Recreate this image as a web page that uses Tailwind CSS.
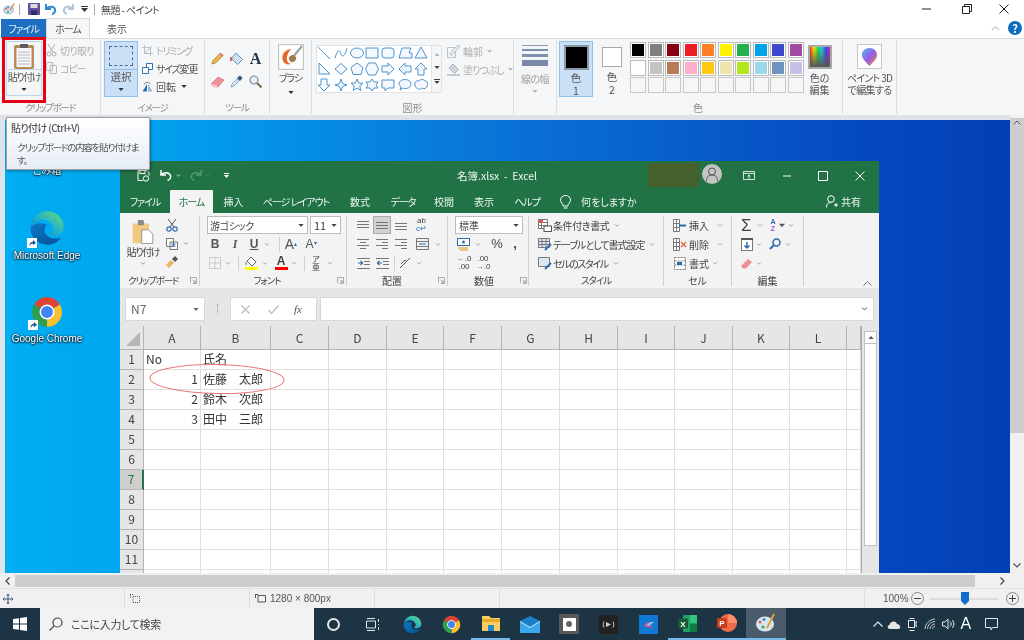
<!DOCTYPE html>
<html lang="ja">
<head>
  <meta charset="UTF-8" />
  <title>無題 - ペイント</title>
  <script src="https://cdn.jsdelivr.net/npm/@tailwindcss/browser@4"></script>
</head>
<body class="w-[1024px] h-[640px] overflow-hidden bg-[#f0f0f0] text-[#555] text-[10px] whitespace-nowrap font-['Noto_Sans_CJK_JP','Noto_Sans',sans-serif] [font-feature-settings:'palt']">
  <!-- shared icons -->
  <svg class="absolute w-0 h-0">
    <symbol id="caret" viewBox="0 0 7 4"><path d="M0 0h7L3.5 4z" fill="currentColor"/></symbol>
    <symbol id="chev" viewBox="0 0 7 4"><path d="M1 .5l2.5 2.5L6 .5" fill="none" stroke="currentColor"/></symbol>
    <symbol id="launcher" viewBox="0 0 8 8"><path d="M.5 7V.5H7.5V7.5H3M3 3l3 3M6 4v2H4" fill="none" stroke="#888" stroke-width=".8"/></symbol>
    <symbol id="chrome" viewBox="0 0 48 48">
      <path d="M24 24L6.7 14A20 20 0 0 1 41.3 14Z" fill="#db4437"/>
      <path d="M24 24L41.3 14A20 20 0 0 1 24 44Z" fill="#fbc02d"/>
      <path d="M24 24L24 44A20 20 0 0 1 6.7 14Z" fill="#2e9e4f"/>
      <circle cx="24" cy="24" r="10" fill="#fff"/><circle cx="24" cy="24" r="8" fill="#4285f4"/>
    </symbol>
    <defs>
      <linearGradient id="edgeTop" x1="0" y1="1" x2="1" y2="0"><stop offset="0" stop-color="#0c6fb4"/><stop offset=".5" stop-color="#27b4c8"/><stop offset="1" stop-color="#66dc74"/></linearGradient>
      <linearGradient id="edgeLow" x1="0" y1="0" x2="1" y2="1"><stop offset="0" stop-color="#0b78c8"/><stop offset="1" stop-color="#0a4f96"/></linearGradient>
    </defs>
    <symbol id="edge" viewBox="0 0 48 48">
      <path d="M4 24C4 35 13 44 24 44C31 44 37 41 41 35C35 38 28 37 24 33C20 29 20 24 24 20C16 17 8 18 4 24Z" fill="url(#edgeLow)"/>
      <path d="M4 24C5 12 14 4 24 4C36 4 44 13 44 23C44 30 38 33 33 33C30 33 27 32 27 31C31 29 32 26 31 23C29 17 24 14 18 14C12 14 7 18 4 24Z" fill="url(#edgeTop)"/>
    </symbol>
    <symbol id="shortcut" viewBox="0 0 10 10"><rect width="10" height="10" fill="#fff"/><path d="M2.5 8C2.5 5 4 3.8 6 3.8V2L9 4.7 6 7.3V5.5C4.5 5.5 3.5 6.3 2.5 8Z" fill="#1a4fa0"/></symbol>
  </svg>

  <!-- the reference is a slightly soft, rescaled capture -->
  <div class="relative w-[1024px] h-[640px] flex flex-col blur-[0.35px]">
    <!-- Paint title bar -->
    <div class="h-[18px] bg-white flex items-center shrink-0">
      <svg class="ml-[3px] w-[12px] h-[12px]" viewBox="0 0 12 12"><ellipse cx="5.5" cy="7" rx="5" ry="4" fill="#cfe0ee" stroke="#7b98b2" stroke-width=".6"/><circle cx="3" cy="6" r="1" fill="#e0584f"/><circle cx="5" cy="9" r="1" fill="#3f9e55"/><circle cx="5" cy="4.5" r="1" fill="#3c82d0"/><path d="M11 .5L7 7.5" stroke="#d2983c" stroke-width="1.5"/></svg>
      <div class="ml-[4px] w-px h-[11px] bg-[#aaa]"></div>
      <svg class="ml-[8px] w-[12px] h-[12px]" viewBox="0 0 12 12"><rect width="12" height="12" rx="1" fill="#5f4f9f"/><rect x="2.5" y="1" width="7" height="4" fill="#ddd"/><rect x="3" y="7.5" width="6" height="4.5" fill="#2e2a66"/></svg>
      <svg class="ml-[5px] w-[12px] h-[12px]" viewBox="0 0 12 12"><path d="M1 1v5h5M1.5 5.5C4 3 9 3 10 6.5C10.5 8.5 9.5 10.5 7 11" fill="none" stroke="#2b88d8" stroke-width="2"/></svg>
      <svg class="ml-[5px] w-[12px] h-[12px]" viewBox="0 0 12 12"><path d="M11 1v5H6M10.5 5.5C8 3 3 3 2 6.5C1.5 8.5 2.5 10.5 5 11" fill="none" stroke="#b6c6d6" stroke-width="2"/></svg>
      <div class="ml-[7px] w-[7px] flex flex-col gap-[1px] text-[#333]"><div class="h-px bg-[#333]"></div><svg class="w-[7px] h-[4px]"><use href="#caret"/></svg></div>
      <div class="ml-[6px] w-px h-[11px] bg-[#aaa]"></div>
      <span class="ml-[6px] text-[#444] tracking-[-.6px]">無題 - ペイント</span>
      <div class="ml-auto flex items-center">
        <svg class="w-[10px] h-[10px]" viewBox="0 0 10 10"><path d="M0 5h9" stroke="#222"/></svg>
        <svg class="ml-[30px] w-[10px] h-[10px]" viewBox="0 0 10 10"><path d="M.5 2.5h7v7h-7zM2.5 2.5v-2h7v7h-2" fill="none" stroke="#222"/></svg>
        <svg class="ml-[27px] mr-[15px] w-[10px] h-[10px]" viewBox="0 0 10 10"><path d="M.5.5l9 9M9.5.5l-9 9" stroke="#222"/></svg>
      </div>
    </div>

    <!-- Paint tabs -->
    <div class="h-[20px] bg-white flex items-end shrink-0 relative">
      <div class="ml-px w-[45px] h-[19px] bg-[#1e6fc2] text-[#e6f0fa] text-center leading-[19px] tracking-[-1px]">ファイル</div>
      <div class="w-[44px] h-[20px] bg-[#f5f6f7] border-x border-t border-[#dadbdc] text-center leading-[19px] tracking-[-1px]">ホーム</div>
      <div class="ml-[11px] w-[32px] h-[19px] text-center leading-[19px]">表示</div>
      <div class="ml-auto mr-[2px] self-center flex items-center">
        <svg class="w-[9px] h-[6px] mr-[8px]" viewBox="0 0 9 6"><path d="M1 5l3.5-3.5L8 5" fill="none" stroke="#c4c4c4" stroke-width="1.2"/></svg>
        <div class="w-[14px] h-[14px] rounded-full bg-[#0f6cbd] text-white text-[11px] font-bold leading-[14px] text-center">?</div>
      </div>
    </div>

    <!-- Paint ribbon -->
    <div class="h-[77px] shrink-0 bg-[#f5f6f7] border-t border-[#dadbdc] pt-[1px] flex">
      <div class="w-[101px] flex flex-col border-r border-[#dcdddf] mb-[1px]">
        <div class="flex-1 flex pl-[6px] pt-[1px]">
          <div class="w-[36px] h-[55px] border border-[#b6d6f2] flex flex-col items-center">
            <div class="h-[28px] w-full border-b border-[#b6d6f2] flex items-center justify-center">
              <svg class="w-[22px] h-[26px]" viewBox="0 0 22 26"><rect x="1" y="2" width="20" height="24" rx="2" fill="#b98a5c"/><rect x="3.5" y="5" width="15" height="19" fill="#f7f7f7"/><path d="M5 9h12M5 12h12M5 15h12M5 18h12M5 21h12" stroke="#b5b8c0"/><rect x="7" y="1" width="8" height="4" rx="1" fill="#5c5c5c"/></svg>
            </div>
            <span class="leading-[14px] tracking-[-1.4px]">貼り付け</span>
            <svg class="w-[6px] h-[3px] mt-[4px] text-[#333]"><use href="#caret"/></svg>
          </div>
          <div class="ml-[4px] flex flex-col text-[#aeaeae]">
            <div class="h-[18px] flex items-center"><svg class="w-[11px] h-[13px]" viewBox="0 0 11 13"><path d="M2 0l5 8M9 0L4 8" stroke="#b0b0b0"/><circle cx="3" cy="10" r="2" fill="none" stroke="#b0b0b0"/><circle cx="8" cy="10" r="2" fill="none" stroke="#b0b0b0"/></svg><span class="ml-[3px] tracking-[-.7px]">切り取り</span></div>
            <div class="h-[18px] flex items-center"><svg class="w-[11px] h-[12px]" viewBox="0 0 11 12"><path d="M.5.5h6v8h-6zM4 3.5h6.5v8H4z" fill="#f5f6f7" stroke="#b8b8b8"/></svg><span class="ml-[3px] tracking-[-1px]">コピー</span></div>
          </div>
        </div>
        <div class="h-[13px] text-center text-[9.5px] leading-[13px] text-[#8c8c8c] tracking-[-1.2px]">クリップボード</div>
      </div>

      <div class="w-[104px] flex flex-col border-r border-[#dcdddf] mb-[1px]">
        <div class="flex-1 flex pl-[3px] pt-[1px]">
          <div class="w-[34px] h-[56px] bg-[#c9e0f7] border border-[#90bfe9] flex flex-col items-center">
            <div class="h-[28px] w-full border-b border-[#90bfe9] flex items-center justify-center">
              <div class="w-[24px] h-[20px] border border-dashed border-[#4a6d94]"></div>
            </div>
            <span class="leading-[14px] text-[10.5px]">選択</span>
            <svg class="w-[6px] h-[3px] mt-[4px] text-[#333]"><use href="#caret"/></svg>
          </div>
          <div class="ml-[4px] flex flex-col">
            <div class="h-[18px] flex items-center text-[#aeaeae]"><svg class="w-[11px] h-[11px]" viewBox="0 0 11 11"><path d="M2.5 0v8.5H11M0 2.5h8.5V11M3 8l7-7" fill="none" stroke="#b8c2cc"/></svg><span class="ml-[3px] tracking-[-1.3px]">トリミング</span></div>
            <div class="h-[18px] flex items-center"><svg class="w-[11px] h-[11px]" viewBox="0 0 11 11"><path d="M.5 4.5h6v6h-6zM4.5 4V.5h6v6H7" fill="#fff" stroke="#2a72b8"/></svg><span class="ml-[3px] tracking-[-1.2px]">サイズ変更</span></div>
            <div class="h-[18px] flex items-center"><svg class="w-[11px] h-[11px]" viewBox="0 0 11 11"><path d="M.5 10.5L5 3v7.5z" fill="#2a72b8"/><path d="M6 3v7.5h4.5z" fill="#9ab8d4"/><path d="M2 3.5C3 1 6.5.5 8 3" fill="none" stroke="#555" stroke-width=".8"/></svg><span class="ml-[3px]">回転</span><svg class="ml-[5px] w-[6px] h-[3px] text-[#333]"><use href="#caret"/></svg></div>
          </div>
        </div>
        <div class="h-[13px] text-center text-[9.5px] leading-[13px] text-[#8c8c8c] tracking-[-1.2px]">イメージ</div>
      </div>

      <div class="w-[65px] flex flex-col border-r border-[#dcdddf] mb-[1px]">
        <div class="flex-1 grid grid-cols-[19px_19px_19px] grid-rows-[23px_23px] pl-[3px] pt-[7px] place-items-center content-start">
          <svg class="w-[13px] h-[13px]" viewBox="0 0 13 13"><path d="M1 12l1-3.5L9.5 1 12 3.5 4.5 11z" fill="#f0b840" stroke="#8a6a30" stroke-width=".7"/><path d="M9.5 1L12 3.5 11 4.5 8.5 2z" fill="#e07070"/></svg>
          <svg class="w-[14px] h-[14px]" viewBox="0 0 14 14"><path d="M6 1l6.5 6.5L7.5 12.5 1.5 6.5z" fill="#cfe3f4" stroke="#6d94b8"/><path d="M1 5C0 8 .5 9 1 9S2 8 1 5z" fill="#e0584f" stroke="#e0584f"/></svg>
          <span class="font-['Liberation_Serif',serif] text-[16px] font-bold text-[#20324a] leading-none">A</span>
          <svg class="w-[15px] h-[12px]" viewBox="0 0 15 12"><path d="M1 8l7-7 6 3-6 7-5-.5z" fill="#ee8f97" stroke="#c9737b" stroke-width=".6"/><path d="M1 8l5 1 2 2-5-.5z" fill="#f7d0d3"/></svg>
          <svg class="w-[13px] h-[13px]" viewBox="0 0 13 13"><path d="M1 12l1-3 5-5 2 2-5 5z" fill="#d4e6f4" stroke="#6b8aa6" stroke-width=".7"/><path d="M7 3l3-2.5 2.5 2.5L10 6z" fill="#33557a"/></svg>
          <svg class="w-[13px] h-[13px]" viewBox="0 0 13 13"><circle cx="5" cy="5" r="4" fill="#e2eef8" stroke="#7f8a96" stroke-width="1.2"/><path d="M8 8l4.5 4.5" stroke="#7f6a50" stroke-width="2"/></svg>
        </div>
        <div class="h-[13px] text-center text-[9.5px] leading-[13px] text-[#8c8c8c] tracking-[-1.2px]">ツール</div>
      </div>

      <div class="w-[42px] flex flex-col border-r border-[#dcdddf] mb-[1px]">
        <div class="flex-1 flex flex-col items-center pt-[4px]">
          <svg class="w-[26px] h-[26px]" viewBox="0 0 26 26"><rect x=".5" y=".5" width="25" height="25" fill="#f4f4f4" stroke="#c4c4c4"/><rect x="2" y="2" width="22" height="22" fill="#fff"/><path d="M24 2L15 13" stroke="#9c9c9c" stroke-width="2"/><path d="M15 11c-4 0-6 4-2 7 3 1 6-2 5-5z" fill="#a37a4c"/><path d="M13 5C6 6 3 11 5 17c1 3 5 4 8 3-5-1-6-8 0-15z" fill="#e8682a"/></svg>
          <span class="leading-[16px] tracking-[-1px]">ブラシ</span>
          <svg class="w-[6px] h-[3px] mt-[5px] text-[#333]"><use href="#caret"/></svg>
        </div>
      </div>

      <div class="w-[202px] flex flex-col border-r border-[#dcdddf] mb-[1px]">
        <div class="flex-1 flex pl-[4px] pt-[5px]">
          <div class="h-[48px] flex border border-[#e2e3e5]">
            <svg class="w-[114px] h-[46px] bg-white" viewBox="0 0 114 46" fill="#f2f8fd" stroke="#4f94cc" stroke-linejoin="round">
              <g transform="translate(7,7)"><path d="M-6-6L6 6" fill="none"/></g>
              <g transform="translate(24,7)"><path d="M-6 5C-3-5-1-3 0 1S4 3 6-5" fill="none"/></g>
              <g transform="translate(40,7)"><ellipse rx="6.5" ry="5"/></g>
              <g transform="translate(55,7)"><rect x="-6" y="-5" width="12" height="10"/></g>
              <g transform="translate(71,7)"><rect x="-6" y="-5" width="12" height="10" rx="3"/></g>
              <g transform="translate(88,7)"><path d="M-6 5L-3-5H6L4 0H7V5Z"/></g>
              <g transform="translate(104,7)"><path d="M0-6L6 5H-6Z"/></g>
              <g transform="translate(7,23)"><path d="M-5-6L6 5H-5Z"/></g>
              <g transform="translate(24,23)"><path d="M0-5.5L6 0 0 5.5-6 0Z"/></g>
              <g transform="translate(40,23)"><path d="M0-6L6-1.5 4 5.5H-4L-6-1.5Z"/></g>
              <g transform="translate(55,23)"><path d="M-3.5-6H3.5L6.5 0 3.5 6H-3.5L-6.5 0Z"/></g>
              <g transform="translate(71,23)"><path d="M-6-3H0V-6L6 0 0 6V3H-6Z"/></g>
              <g transform="translate(88,23)"><path d="M6-3H0V-6L-6 0 0 6V3H6Z"/></g>
              <g transform="translate(104,23)"><path d="M-3 6V0H-6L0-6 6 0H3V6Z"/></g>
              <g transform="translate(7,39)"><path d="M-3-6V0H-6L0 6 6 0H3V-6Z"/></g>
              <g transform="translate(24,39)"><path d="M0-6L1.5-1.5 6 0 1.5 1.5 0 6-1.5 1.5-6 0-1.5-1.5Z"/></g>
              <g transform="translate(40,39)"><path d="M0-6L1.8-2 6-1.8 2.8 1 3.8 5.5 0 3-3.8 5.5-2.8 1-6-1.8-1.8-2Z"/></g>
              <g transform="translate(55,39)"><path d="M0-6L2-3H6L4 0 6 3H2L0 6-2 3H-6L-4 0-6-3H-2Z"/></g>
              <g transform="translate(71,39)"><path d="M-6-5H6V3H0L-3 6V3H-6Z"/></g>
              <g transform="translate(88,39)"><path d="M-6-1C-6-7 6-7 6-1 6 4-1 4-2 3L-5 5-4 2C-5 1-6 0-6-1Z"/></g>
              <g transform="translate(104,39)"><path d="M-6 0C-7-3-4-5-2-4-1-6 3-6 4-4 7-4 7 0 6 1 6 4 2 4 1 3-1 5-3 4-4 3-5 3-6 2-6 0Z"/></g>
            </svg>
            <div class="w-[10px] flex flex-col items-center pt-[7px] gap-[10px] bg-[#f5f6f7] border-l border-[#e2e3e5]">
              <svg class="w-[6px] h-[3px] text-[#bbb] rotate-180"><use href="#caret"/></svg>
              <svg class="w-[6px] h-[3px] text-[#444]"><use href="#caret"/></svg>
              <div class="flex flex-col gap-[1px] text-[#444]"><div class="h-px w-[6px] bg-[#444]"></div><svg class="w-[6px] h-[3px]"><use href="#caret"/></svg></div>
            </div>
          </div>
          <div class="ml-[5px] flex flex-col text-[#aeaeae] -mt-[3px]">
            <div class="h-[18px] flex items-center"><svg class="w-[13px] h-[13px]" viewBox="0 0 13 13"><path d="M.5 2.5h8v10h-8z" fill="none" stroke="#b8c2cc"/><path d="M3 10V8l8-8 2 2-8 8z" fill="#e4eaf0" stroke="#a8b4c0" stroke-width=".7"/></svg><span class="ml-[3px]">輪郭</span><svg class="ml-[4px] w-[5px] h-[3px] text-[#bbb]"><use href="#caret"/></svg></div>
            <div class="h-[18px] flex items-center"><svg class="w-[13px] h-[13px]" viewBox="0 0 13 13"><path d="M6 1l5.5 5.5-4 4L2 5z" fill="#cdd7e2" stroke="#a8b4c0"/><path d="M0 11h13v2H0z" fill="#c0cad6"/></svg><span class="ml-[3px] tracking-[-1px]">塗りつぶし</span><svg class="ml-[4px] w-[5px] h-[3px] text-[#bbb]"><use href="#caret"/></svg></div>
          </div>
        </div>
        <div class="h-[13px] text-center text-[10px] leading-[13px] text-[#8c8c8c]">図形</div>
      </div>

      <div class="w-[43px] flex flex-col border-r border-[#dcdddf] mb-[1px] text-[#a0a0a0]">
        <div class="flex-1 flex flex-col items-center pt-[5px]">
          <div class="w-[26px] flex flex-col">
            <div class="h-px bg-[#8a9ab8]"></div>
            <div class="mt-[3px] h-[2px] bg-[#7f8fb0]"></div>
            <div class="mt-[3px] h-[3px] bg-[#7f8fb0]"></div>
            <div class="mt-[3px] h-[6px] bg-[#7888aa]"></div>
          </div>
          <span class="mt-[5px] leading-[16px] tracking-[-.5px]">線の幅</span>
          <svg class="w-[6px] h-[3px] mt-[3px] text-[#bbb]"><use href="#caret"/></svg>
        </div>
      </div>

      <div class="w-[286px] flex flex-col border-r border-[#dcdddf] mb-[1px]">
        <div class="flex-1 flex pl-[2px] pt-[1px]">
          <div class="w-[34px] h-[56px] bg-[#c9e0f7] border border-[#90bfe9] flex flex-col items-center pt-[3px]">
            <div class="w-[25px] h-[25px] bg-black border-2 border-[#8d98a5]"></div>
            <span class="mt-[1px] leading-[14px] text-[10.5px]">色</span>
            <span class="leading-[11px] text-[10.5px]">1</span>
          </div>
          <div class="w-[34px] ml-[2px] flex flex-col items-center pt-[6px]">
            <div class="w-[20px] h-[20px] bg-white border border-[#a8a8a8] shadow-[inset_0_0_0_1px_#fff]"></div>
            <span class="mt-[3px] leading-[14px] text-[10.5px]">色</span>
            <span class="leading-[11px] text-[10.5px]">2</span>
          </div>
          <div class="ml-[1px] pt-[1px] grid grid-cols-[repeat(10,16px)] grid-rows-[repeat(3,16px)] gap-x-[1.5px] gap-y-[1.5px]">
            <div class="border border-[#bbb] shadow-[inset_0_0_0_1px_#fff] bg-[#000000]"></div><div class="border border-[#bbb] shadow-[inset_0_0_0_1px_#fff] bg-[#7f7f7f]"></div><div class="border border-[#bbb] shadow-[inset_0_0_0_1px_#fff] bg-[#880015]"></div><div class="border border-[#bbb] shadow-[inset_0_0_0_1px_#fff] bg-[#ed1c24]"></div><div class="border border-[#bbb] shadow-[inset_0_0_0_1px_#fff] bg-[#ff7f27]"></div><div class="border border-[#bbb] shadow-[inset_0_0_0_1px_#fff] bg-[#fff200]"></div><div class="border border-[#bbb] shadow-[inset_0_0_0_1px_#fff] bg-[#22b14c]"></div><div class="border border-[#bbb] shadow-[inset_0_0_0_1px_#fff] bg-[#00a2e8]"></div><div class="border border-[#bbb] shadow-[inset_0_0_0_1px_#fff] bg-[#3f48cc]"></div><div class="border border-[#bbb] shadow-[inset_0_0_0_1px_#fff] bg-[#a349a4]"></div>
            <div class="border border-[#bbb] shadow-[inset_0_0_0_1px_#fff] bg-[#ffffff]"></div><div class="border border-[#bbb] shadow-[inset_0_0_0_1px_#fff] bg-[#c3c3c3]"></div><div class="border border-[#bbb] shadow-[inset_0_0_0_1px_#fff] bg-[#b97a57]"></div><div class="border border-[#bbb] shadow-[inset_0_0_0_1px_#fff] bg-[#ffaec9]"></div><div class="border border-[#bbb] shadow-[inset_0_0_0_1px_#fff] bg-[#ffc90e]"></div><div class="border border-[#bbb] shadow-[inset_0_0_0_1px_#fff] bg-[#efe4b0]"></div><div class="border border-[#bbb] shadow-[inset_0_0_0_1px_#fff] bg-[#b5e61d]"></div><div class="border border-[#bbb] shadow-[inset_0_0_0_1px_#fff] bg-[#99d9ea]"></div><div class="border border-[#bbb] shadow-[inset_0_0_0_1px_#fff] bg-[#7092be]"></div><div class="border border-[#bbb] shadow-[inset_0_0_0_1px_#fff] bg-[#c8bfe7]"></div>
            <div class="border border-[#c8c8c8]"></div><div class="border border-[#c8c8c8]"></div><div class="border border-[#c8c8c8]"></div><div class="border border-[#c8c8c8]"></div><div class="border border-[#c8c8c8]"></div><div class="border border-[#c8c8c8]"></div><div class="border border-[#c8c8c8]"></div><div class="border border-[#c8c8c8]"></div><div class="border border-[#c8c8c8]"></div><div class="border border-[#c8c8c8]"></div>
          </div>
          <div class="ml-[4px] w-[24px] flex flex-col items-center pt-[4px]">
            <div class="w-[24px] h-[24px] border-2 border-[#a8a8a8] bg-[linear-gradient(to_bottom,transparent,#555),linear-gradient(to_right,#ff2a2a,#ffee00,#22dd44,#22ccee,#3344ee,#dd22cc)]"></div>
            <span class="mt-[3px] leading-[12px] w-[24px] text-center">色の<br>編集</span>
          </div>
        </div>
        <div class="h-[13px] text-[10px] leading-[13px] text-[#8c8c8c] pl-[136px]">色</div>
      </div>

      <div class="w-[54px] flex flex-col border-r border-[#dcdddf] mb-[1px]">
        <div class="flex-1 flex flex-col items-center pt-[4px]">
          <div class="w-[25px] h-[25px] bg-white border border-[#c8c8c8] flex items-center justify-center">
            <svg class="w-[15px] h-[18px]" viewBox="0 0 15 18"><defs><linearGradient id="balloon" x1="0" y1="0" x2="1" y2="1"><stop offset="0" stop-color="#3dc4f0"/><stop offset=".5" stop-color="#9a5be8"/><stop offset="1" stop-color="#f08a30"/></linearGradient></defs><path d="M7.5 0C12 0 15 3 15 7c0 4-4 7-7.5 11C4 14 0 11 0 7 0 3 3 0 7.5 0Z" fill="url(#balloon)"/></svg>
          </div>
          <span class="mt-[3px] leading-[12px] text-center tracking-[-.7px]">ペイント 3D<br>で編集する</span>
        </div>
      </div>
    </div>

    <!-- canvas area -->
    <div class="flex-1 min-h-0 flex bg-[#dfe3e9]">
      <div class="flex-1 min-w-0 pl-[5px] pt-[5px]">
        <div class="relative h-full bg-[linear-gradient(90deg,#00aef2_0%,#00a6f0_11%,#0a72d6_50%,#0549c0_85%,#033fb4_100%)] overflow-hidden">
          <!-- desktop icons -->
          <div class="absolute left-[0px] top-[44px] w-[84px] text-center text-white text-[10px] leading-[12px] [text-shadow:0_0_2px_#000,0_1px_2px_#000]">ごみ箱</div>
          <div class="absolute left-[0px] top-[88px] w-[84px] flex flex-col items-center">
            <div class="relative w-[40px] h-[40px]">
              <svg class="w-[40px] h-[40px]"><use href="#edge"/></svg>
              <svg class="absolute left-0 bottom-0 w-[10px] h-[10px]"><use href="#shortcut"/></svg>
            </div>
            <span class="mt-[1px] text-white text-[10px] leading-[14px] font-['Liberation_Sans',sans-serif] [text-shadow:0_0_2px_#000,0_1px_2px_#000]">Microsoft Edge</span>
          </div>
          <div class="absolute left-[0px] top-[174px] w-[84px] flex flex-col items-center">
            <div class="relative w-[36px] h-[36px]">
              <svg class="w-[36px] h-[36px]"><use href="#chrome"/></svg>
              <svg class="absolute -left-px bottom-0 w-[10px] h-[10px]"><use href="#shortcut"/></svg>
            </div>
            <span class="mt-[2px] text-white text-[10px] leading-[14px] font-['Liberation_Sans',sans-serif] [text-shadow:0_0_2px_#000,0_1px_2px_#000]">Google Chrome</span>
          </div>

          <!-- Excel window -->
          <div class="absolute left-[115px] top-[41px] w-[759px] h-[412px] flex flex-col overflow-hidden bg-[#e6e6e6] text-[#444]">
            <div class="h-[29px] shrink-0 bg-[#217346] flex items-center text-white relative">
              <svg class="ml-[17px] w-[13px] h-[13px]" viewBox="0 0 13 13"><path d="M1 1.5h9l2 2v3M1 1.5v10h5" fill="none" stroke="#fff"/><rect x="3" y="1.5" width="5" height="3" fill="none" stroke="#fff"/><circle cx="9" cy="9.5" r="2.7" fill="none" stroke="#fff"/></svg>
              <svg class="ml-[10px] w-[13px] h-[13px]" viewBox="0 0 13 13"><path d="M1 1v5h5M1.5 5.5C4 3 9 3 10.5 6.5 11 8.5 10 10.5 7.5 11.5" fill="none" stroke="#fff" stroke-width="1.5"/></svg>
              <svg class="ml-[3px] w-[5px] h-[3px] text-white"><use href="#chev"/></svg>
              <svg class="ml-[8px] w-[13px] h-[13px]" viewBox="0 0 13 13"><path d="M12 1v5H7M11.5 5.5C9 3 4 3 2.5 6.5 2 8.5 3 10.5 5.5 11.5" fill="none" stroke="#4f9a73" stroke-width="1.5"/></svg>
              <svg class="ml-[3px] w-[5px] h-[3px] text-[#4f9a73]"><use href="#chev"/></svg>
              <div class="ml-[14px] flex flex-col gap-[1px] text-white"><div class="h-px w-[5px] bg-white"></div><svg class="w-[5px] h-[3px]"><use href="#caret"/></svg></div>
              <span class="ml-[228px] text-[10.5px] text-[#f0f6f2]">名簿.xlsx&nbsp; - &nbsp;Excel</span>
              <div class="absolute left-[528px] top-[2px] w-[51px] h-[24px] bg-[#45602b]"></div>
              <div class="absolute left-[582px] top-[3px] w-[20px] h-[20px] rounded-full bg-[#c4c4c4] flex items-center justify-center">
                <svg class="w-[12px] h-[14px]" viewBox="0 0 12 14"><circle cx="6" cy="4.5" r="3.5" fill="none" stroke="#555"/><path d="M.5 14c0-4 2-6 5.5-6s5.5 2 5.5 6" fill="none" stroke="#555"/></svg>
              </div>
              <div class="ml-auto flex items-center mr-[14px]">
                <svg class="w-[12px] h-[9px]" viewBox="0 0 12 9"><path d="M.5.5h11v8H.5zM.5 2.5h11M6 8V4M4.5 5.5L6 4l1.5 1.5" fill="none" stroke="#fff" stroke-width=".8"/></svg>
                <svg class="ml-[27px] w-[10px] h-[10px]" viewBox="0 0 10 10"><path d="M1 5h8" stroke="#fff"/></svg>
                <svg class="ml-[26px] w-[10px] h-[10px]" viewBox="0 0 10 10"><path d="M.5.5h9v9h-9z" fill="none" stroke="#fff"/></svg>
                <svg class="ml-[27px] w-[10px] h-[10px]" viewBox="0 0 10 10"><path d="M.5.5l9 9M9.5.5l-9 9" stroke="#fff"/></svg>
              </div>
            </div>
            <div class="h-[23px] shrink-0 bg-[#217346] flex items-center text-[#eef6f1] text-[10px] relative">
              <span class="w-[50px] text-center tracking-[-1px]">ファイル</span>
              <span class="h-[23px] w-[43px] bg-[#f3f3f3] text-[#217346] text-center leading-[23px] rounded-t-[1px] tracking-[-1px]">ホーム</span>
              <span class="ml-[4px] w-[33px] text-center">挿入</span>
              <span class="ml-[9px] w-[74px] text-center tracking-[-1px]">ページ レイアウト</span>
              <span class="ml-[12px] w-[30px] text-center">数式</span>
              <span class="ml-[12px] w-[32px] text-center tracking-[-1px]">データ</span>
              <span class="ml-[10px] w-[30px] text-center">校閲</span>
              <span class="ml-[10px] w-[30px] text-center">表示</span>
              <span class="ml-[11px] w-[34px] text-center tracking-[-1px]">ヘルプ</span>
              <svg class="ml-[16px] w-[11px] h-[14px]" viewBox="0 0 11 14"><path d="M5.5.5C8.5.5 10.5 2.5 10.5 5.2 10.5 7.5 8 8.5 7.8 11H3.2C3 8.5.5 7.5.5 5.2.5 2.5 2.5.5 5.5.5ZM3.5 13h4" fill="none" stroke="#fff"/></svg>
              <span class="ml-[10px]">何をしますか</span>
              <div class="ml-auto mr-[18px] flex items-center">
                <svg class="w-[12px] h-[13px]" viewBox="0 0 12 13"><circle cx="5" cy="4" r="3.3" fill="none" stroke="#fff"/><path d="M.5 12.5c0-4 2-5 4.5-5M8 10h4M10 8v4" fill="none" stroke="#fff"/></svg>
                <span class="ml-[3px]">共有</span>
              </div>
            </div>

            <!-- Excel ribbon -->
            <div class="h-[75px] shrink-0 bg-[#f3f3f3] flex">
              <div class="w-[80px] mt-[3px] mb-[2px] border-r border-[#cfcfcf] flex flex-col">
                <div class="flex-1 flex">
                  <div class="w-[46px] flex flex-col items-center">
                    <svg class="mt-[4px] w-[22px] h-[24px]" viewBox="0 0 24 28"><rect x="0" y="4" width="19" height="23" rx="1" fill="#f2c97e"/><rect x="6" y="0" width="7" height="6" rx="1" fill="#8a8a8a"/><path d="M10.5 11.5h8l5 5v11h-13z" fill="#fff" stroke="#8a8a8a"/></svg>
                    <span class="mt-[1px] leading-[13px] tracking-[-1.4px]">貼り付け</span>
                    <svg class="mt-[4px] w-[6px] h-[3px] text-[#777]"><use href="#chev"/></svg>
                  </div>
                  <div class="flex flex-col">
                    <div class="h-[18px] flex items-center"><svg class="w-[12px] h-[13px]" viewBox="0 0 12 13"><path d="M2 0l6 8M10 0L4 8" stroke="#555"/><circle cx="3" cy="10" r="2.2" fill="none" stroke="#2b6cb0" stroke-width="1.2"/><circle cx="9" cy="10" r="2.2" fill="none" stroke="#2b6cb0" stroke-width="1.2"/></svg></div>
                    <div class="h-[19px] flex items-center"><svg class="w-[12px] h-[12px]" viewBox="0 0 12 12"><path d="M.5.5h7v8h-7zM4 4h7.5v7.5H4z" fill="#fff" stroke="#777"/><path d="M5.5 6h4M5.5 8h4" stroke="#2b6cb0"/></svg><svg class="ml-[5px] w-[6px] h-[3px] text-[#777]"><use href="#chev"/></svg></div>
                    <div class="h-[18px] flex items-center"><svg class="w-[12px] h-[12px]" viewBox="0 0 12 12"><path d="M0 9l5-5 3 3-5 5z" fill="#e8b667"/><path d="M6 3l3-3 3 3-3 3z" fill="#555"/></svg></div>
                  </div>
                </div>
                <div class="h-[14px] pt-[3px] flex items-center text-[9.5px] pl-[8px]"><span class="w-[50px] text-center tracking-[-1.2px]">クリップボード</span><svg class="ml-[12px] w-[7px] h-[7px]"><use href="#launcher"/></svg></div>
              </div>

              <div class="w-[147px] mt-[3px] mb-[2px] border-r border-[#cfcfcf] flex flex-col">
                <div class="flex-1 flex flex-col">
                  <div class="h-[18px] flex mb-[1px] ml-[7px] gap-[2px]">
                    <div class="w-[101px] bg-white border border-[#bcbcbc] flex items-center px-[2px]"><span class="flex-1 tracking-[-.3px]">游ゴシック</span><svg class="w-[6px] h-[3px] text-[#444] mr-[1px]"><use href="#caret"/></svg></div>
                    <div class="w-[31px] bg-white border border-[#bcbcbc] flex items-center px-[3px]"><span class="flex-1 text-[11px]">11</span><svg class="w-[6px] h-[3px] text-[#444]"><use href="#caret"/></svg></div>
                  </div>
                  <div class="h-[18px] mb-[1px] flex items-center text-[#555] font-['Liberation_Sans',sans-serif]">
                    <span class="ml-[7px] w-[16px] text-center font-bold text-[12px]">B</span>
                    <span class="ml-[4px] w-[16px] text-center italic font-['Liberation_Serif',serif] font-bold text-[12px]">I</span>
                    <span class="ml-[3px] w-[16px] text-center underline font-bold text-[12px]">U</span>
                    <svg class="ml-[2px] w-[6px] h-[3px] text-[#888]"><use href="#chev"/></svg>
                    <div class="ml-[9px] w-px h-[15px] bg-[#d0d0d0]"></div>
                    <span class="ml-[3px] w-[16px] text-center text-[14px] leading-none">A<sup class="text-[#2b6cb0] text-[6px]">▴</sup></span>
                    <span class="ml-[4px] w-[16px] text-center text-[12px] leading-none">A<sup class="text-[#2b6cb0] text-[6px]">▾</sup></span>
                  </div>
                  <div class="h-[18px] flex items-center">
                    <svg class="ml-[9px] mr-[2px] w-[12px] h-[12px]" viewBox="0 0 12 12"><path d="M.5.5h11v11H.5zM6 .5v11M.5 6h11" fill="none" stroke="#aaa" stroke-dasharray="1 1"/></svg>
                    <svg class="ml-[2px] w-[6px] h-[3px] text-[#888]"><use href="#chev"/></svg>
                    <div class="ml-[7px] w-px h-[15px] bg-[#d0d0d0]"></div>
                    <div class="ml-[4px] w-[16px] flex flex-col items-center"><svg class="w-[13px] h-[11px]" viewBox="0 0 13 11"><path d="M6 1l5 5-4 4-5-5z" fill="#fff" stroke="#666"/><path d="M1 5C0 8 .5 9 1 9s1-1 0-4z" fill="#666"/></svg><div class="w-[13px] h-[3px] bg-[#ffff00]"></div></div>
                    <svg class="ml-[3px] w-[6px] h-[3px] text-[#888]"><use href="#chev"/></svg>
                    <div class="ml-[5px] w-[16px] flex flex-col items-center leading-[11px] font-['Liberation_Sans',sans-serif] font-bold text-[12px]"><span>A</span><div class="w-[13px] h-[3px] bg-[#ff0000]"></div></div>
                    <svg class="ml-[2px] w-[6px] h-[3px] text-[#888]"><use href="#chev"/></svg>
                    <div class="ml-[7px] w-px h-[15px] bg-[#d0d0d0]"></div>
                    <div class="ml-[3px] w-[16px] flex flex-col items-center text-[8px] leading-[8px]"><span class="h-[8px] overflow-hidden">ア</span><span class="h-[8px] overflow-hidden">亜</span></div>
                    <svg class="ml-[3px] w-[6px] h-[3px] text-[#888]"><use href="#chev"/></svg>
                  </div>
                </div>
                <div class="h-[14px] pt-[3px] flex items-center text-[9.5px]"><span class="ml-[47px] w-[40px] text-center tracking-[-1px]">フォント</span><svg class="ml-[50px] w-[7px] h-[7px]"><use href="#launcher"/></svg></div>
              </div>

              <div class="w-[101px] mt-[3px] mb-[2px] border-r border-[#cfcfcf] flex flex-col">
                <div class="flex-1 flex flex-col">
                  <div class="h-[18px] mb-[1px] flex items-center">
                    <svg class="ml-[10px] w-[12px] h-[9px]" viewBox="0 0 12 9"><path d="M0 .5h12M0 3.5h12M0 6.5h12" stroke="#777"/></svg>
                    <div class="ml-[4px] w-[18px] h-[18px] bg-[#d2d2d2] border border-[#aaa] flex items-center justify-center"><svg class="w-[12px] h-[9px]" viewBox="0 0 12 9"><path d="M0 1.5h12M0 4.5h12M0 7.5h12" stroke="#777"/></svg></div>
                    <svg class="ml-[4px] w-[12px] h-[9px]" viewBox="0 0 12 9"><path d="M0 2.5h12M0 5.5h12M0 8.5h12" stroke="#777"/></svg>
                    <div class="ml-[9px] flex flex-col items-center text-[8px] leading-[8px] font-['Liberation_Sans',sans-serif]"><span class="h-[8px]">ab</span><span class="h-[8px] text-[#2b6cb0]">c↵</span></div>
                  </div>
                  <div class="h-[18px] mb-[1px] flex items-center">
                    <svg class="ml-[10px] w-[12px] h-[10px]" viewBox="0 0 12 10"><path d="M0 .5h12M3 3.5h6M0 6.5h12M3 9.5h6" stroke="#777"/></svg>
                    <svg class="ml-[7px] w-[12px] h-[10px]" viewBox="0 0 12 10"><path d="M0 .5h12M6 3.5h6M0 6.5h12M6 9.5h6" stroke="#777"/></svg>
                    <svg class="ml-[7px] w-[12px] h-[10px]" viewBox="0 0 12 10"><path d="M0 .5h12M6 3.5h6M0 6.5h12M6 9.5h6" stroke="#777"/></svg>
                    <svg class="ml-[9px] w-[13px] h-[12px]" viewBox="0 0 13 12"><path d="M.5.5h12v11H.5zM.5 3.5h12M.5 8.5h12" fill="none" stroke="#777"/><path d="M3 6h7" stroke="#2b6cb0"/></svg>
                    <svg class="ml-[6px] w-[6px] h-[3px] text-[#888]"><use href="#chev"/></svg>
                  </div>
                  <div class="h-[18px] flex items-center">
                    <svg class="ml-[10px] w-[13px] h-[11px]" viewBox="0 0 13 11"><path d="M0 .5h13M7 3.5h6M7 6.5h6M0 10.5h13" stroke="#777"/><path d="M1 5h4M3.5 3L5.5 5 3.5 7" fill="none" stroke="#2b6cb0" stroke-width="1.2"/></svg>
                    <svg class="ml-[6px] w-[13px] h-[11px]" viewBox="0 0 13 11"><path d="M0 .5h13M7 3.5h6M7 6.5h6M0 10.5h13" stroke="#777"/><path d="M6 5H2M3.5 3L1.5 5 3.5 7" fill="none" stroke="#2b6cb0" stroke-width="1.2"/></svg>
                    <div class="ml-[5px] w-px h-[15px] bg-[#d0d0d0]"></div>
                    <svg class="ml-[4px] w-[13px] h-[12px]" viewBox="0 0 13 12"><path d="M1 11L11 1" stroke="#555"/><path d="M2 7L6 3 8 5" fill="none" stroke="#555"/></svg>
                    <svg class="ml-[4px] w-[6px] h-[3px] text-[#888]"><use href="#chev"/></svg>
                  </div>
                </div>
                <div class="h-[14px] pt-[3px] flex items-center text-[10px]"><span class="ml-[35px] w-[20px] text-center">配置</span><svg class="ml-[36px] w-[7px] h-[7px]"><use href="#launcher"/></svg></div>
              </div>

              <div class="w-[81px] mt-[3px] mb-[2px] border-r border-[#cfcfcf] flex flex-col">
                <div class="flex-1 flex flex-col">
                  <div class="h-[18px] mb-[1px] ml-[7px] w-[68px] bg-white border border-[#bcbcbc] flex items-center px-[3px]"><span class="flex-1">標準</span><svg class="w-[6px] h-[3px] text-[#444]"><use href="#caret"/></svg></div>
                  <div class="h-[18px] mb-[1px] flex items-center">
                    <svg class="ml-[9px] w-[13px] h-[13px]" viewBox="0 0 13 13"><rect x=".5" y=".5" width="12" height="7" fill="#fff" stroke="#2b6cb0"/><circle cx="6.5" cy="4" r="1.5" fill="#2b6cb0"/><path d="M1 10h10M3 12h8" stroke="#e8b667" stroke-width="1.5"/></svg>
                    <svg class="ml-[5px] w-[6px] h-[3px] text-[#888]"><use href="#chev"/></svg>
                    <span class="ml-[8px] w-[16px] text-center text-[13px] font-['Liberation_Sans',sans-serif]">%</span>
                    <span class="ml-[5px] w-[10px] text-center font-bold text-[13px] leading-[10px] font-['Liberation_Sans',sans-serif]">,</span>
                  </div>
                  <div class="h-[18px] flex items-center font-['Liberation_Sans',sans-serif] text-[8px] leading-[8px]">
                    <span class="ml-[8px] w-[16px] text-center"><span class="text-[#2b6cb0]">←</span>.0<br>.00</span>
                    <span class="ml-[3px] w-[16px] text-center">.00<br><span class="text-[#2b6cb0]">→</span>.0</span>
                  </div>
                </div>
                <div class="h-[14px] pt-[3px] flex items-center text-[10px]"><span class="ml-[26px] w-[20px] text-center">数値</span><svg class="ml-[26px] w-[7px] h-[7px]"><use href="#launcher"/></svg></div>
              </div>

              <div class="w-[135px] mt-[3px] mb-[2px] border-r border-[#cfcfcf] flex flex-col">
                <div class="flex-1 flex flex-col pl-[9px]">
                  <div class="h-[18px] mb-[1px] flex items-center"><svg class="w-[14px] h-[13px]" viewBox="0 0 14 13"><path d="M.5.5h9v9h-9zM.5 3.5h9M.5 6.5h9M3.5.5v9" fill="#fff" stroke="#777"/><rect x="1" y="1" width="4" height="3" fill="#d9534f"/><rect x="6" y="7" width="7.5" height="5.5" fill="#fff" stroke="#555"/></svg><span class="ml-[1px] tracking-[-.4px]">条件付き書式</span><svg class="ml-[5px] w-[6px] h-[3px] text-[#888]"><use href="#chev"/></svg></div>
                  <div class="h-[18px] mb-[1px] flex items-center"><svg class="w-[14px] h-[13px]" viewBox="0 0 14 13"><path d="M.5.5h11v9H.5zM.5 3.5h11M.5 6.5h11M4 .5v9M8 .5v9" fill="#dde7f3" stroke="#777"/><path d="M7 12l6-6" stroke="#2b6cb0" stroke-width="2"/></svg><span class="ml-[1px] tracking-[-1px]">テーブルとして書式設定</span><svg class="ml-[4px] w-[6px] h-[3px] text-[#888]"><use href="#chev"/></svg></div>
                  <div class="h-[18px] flex items-center"><svg class="w-[14px] h-[13px]" viewBox="0 0 14 13"><path d="M.5.5h11v9H.5z" fill="#dde7f3" stroke="#777"/><path d="M7 12l6-6" stroke="#2b6cb0" stroke-width="2"/></svg><span class="ml-[1px] tracking-[-1.4px]">セルのスタイル</span><svg class="ml-[5px] w-[6px] h-[3px] text-[#888]"><use href="#chev"/></svg></div>
                </div>
                <div class="h-[14px] pt-[3px] flex items-center justify-center text-[9.5px] tracking-[-1px]">スタイル</div>
              </div>

              <div class="w-[68px] mt-[3px] mb-[2px] border-r border-[#cfcfcf] flex flex-col">
                <div class="flex-1 flex flex-col pl-[9px]">
                  <div class="h-[18px] mb-[1px] flex items-center"><svg class="w-[14px] h-[13px]" viewBox="0 0 14 13"><path d="M.5.5h6v12h-6zM.5 4.5h6M.5 8.5h6M3.5.5v12" fill="#fff" stroke="#777"/><path d="M6 6.5h7" stroke="#2b6cb0" stroke-width="2"/></svg><span class="ml-[2px]">挿入</span><svg class="ml-[8px] w-[6px] h-[3px] text-[#888]"><use href="#chev"/></svg></div>
                  <div class="h-[18px] mb-[1px] flex items-center"><svg class="w-[14px] h-[13px]" viewBox="0 0 14 13"><path d="M.5.5h6v12h-6zM.5 4.5h6M.5 8.5h6M3.5.5v12" fill="#fff" stroke="#777"/><path d="M8 4l5 5M13 4L8 9" stroke="#e2603f" stroke-width="1.2"/></svg><span class="ml-[2px]">削除</span><svg class="ml-[8px] w-[6px] h-[3px] text-[#888]"><use href="#chev"/></svg></div>
                  <div class="h-[18px] flex items-center"><svg class="w-[14px] h-[13px]" viewBox="0 0 14 13"><path d="M1.5.5h11v12h-11zM1.5 4h11M1.5 8h11" fill="#fff" stroke="#777" stroke-dasharray="2 1"/><rect x="4" y="5" width="5" height="3" fill="#2b6cb0"/></svg><span class="ml-[2px]">書式</span><svg class="ml-[3px] w-[6px] h-[3px] text-[#888]"><use href="#chev"/></svg></div>
                </div>
                <div class="h-[14px] pt-[3px] flex items-center justify-center text-[10px]">セル</div>
              </div>

              <div class="w-[72px] mt-[3px] mb-[2px] border-r border-[#cfcfcf] flex flex-col">
                <div class="flex-1 flex flex-col pl-[9px]">
                  <div class="h-[18px] mb-[1px] flex items-center"><span class="w-[13px] text-[17px] leading-none font-['Liberation_Sans',sans-serif]">Σ</span><svg class="ml-[3px] w-[6px] h-[3px] text-[#888]"><use href="#chev"/></svg><div class="ml-[4px] w-[12px] flex flex-col items-center text-[7px] leading-[7px] font-bold font-['Liberation_Sans',sans-serif]"><span class="h-[7px] text-[#2b6cb0]">A</span><span class="h-[7px] text-[#9b59d0]">Z</span></div><svg class="w-[6px] h-[5px] text-[#555]"><use href="#caret"/></svg><svg class="ml-[3px] w-[6px] h-[3px] text-[#888]"><use href="#chev"/></svg></div>
                  <div class="h-[18px] mb-[1px] flex items-center"><svg class="w-[12px] h-[13px]" viewBox="0 0 12 13"><rect x=".5" y=".5" width="11" height="12" fill="#fff" stroke="#777"/><rect width="12" height="2" fill="#555"/><path d="M6 4v6M3.5 7.5L6 10 8.5 7.5" fill="none" stroke="#2b6cb0" stroke-width="1.5"/></svg><svg class="ml-[3px] w-[6px] h-[3px] text-[#888]"><use href="#chev"/></svg><svg class="ml-[7px] w-[12px] h-[12px]" viewBox="0 0 12 12"><circle cx="7.5" cy="4.5" r="3.5" fill="none" stroke="#2b6cb0" stroke-width="1.5"/><path d="M5 7L1 11" stroke="#2b6cb0" stroke-width="2"/></svg><svg class="ml-[4px] w-[6px] h-[3px] text-[#888]"><use href="#chev"/></svg></div>
                  <div class="h-[18px] flex items-center"><svg class="w-[12px] h-[11px]" viewBox="0 0 12 11"><path d="M0 8l7-7 4 3-6 6.5H2z" fill="#ee8f9a"/></svg><svg class="ml-[3px] w-[6px] h-[3px] text-[#888]"><use href="#chev"/></svg></div>
                </div>
                <div class="h-[14px] pt-[3px] flex items-center justify-center text-[10px]">編集</div>
              </div>

              <div class="flex-1 flex items-end justify-end pb-[2px] pr-[7px]"><svg class="w-[9px] h-[5px]" viewBox="0 0 9 5"><path d="M.5 4.5L4.5.5l4 4" fill="none" stroke="#777"/></svg></div>
            </div>

            <!-- formula bar -->
            <div class="h-[38px] shrink-0 flex items-start pt-[9px] pl-[5px] bg-[#e6e6e6]">
              <div class="w-[80px] h-[24px] bg-white border border-[#d8d8d8] flex items-center px-[5px] text-[12px] text-[#666]"><span class="flex-1">N7</span><svg class="w-[6px] h-[3px] text-[#666]"><use href="#caret"/></svg></div>
              <div class="ml-[12px] mt-[7px] w-[1px] h-[10px] border-l border-dotted border-[#999]"></div>
              <div class="ml-[12px] w-[87px] h-[24px] bg-white border border-[#d8d8d8] flex items-center text-[#bbb]">
                <svg class="ml-[10px] w-[9px] h-[9px]" viewBox="0 0 9 9"><path d="M.5.5l8 8M8.5.5l-8 8" stroke="#bbb" stroke-width="1.2"/></svg>
                <svg class="ml-[18px] w-[11px] h-[9px]" viewBox="0 0 11 9"><path d="M.5 5l3 3.5L10.5.5" fill="none" stroke="#bbb" stroke-width="1.2"/></svg>
                <span class="ml-[15px] text-[#555] italic font-['Liberation_Serif',serif] text-[11px]">fx</span>
              </div>
              <div class="ml-[3px] w-[554px] h-[24px] bg-white border border-[#d8d8d8] flex items-center justify-end pr-[5px]"><svg class="w-[7px] h-[4px] text-[#555]"><use href="#chev"/></svg></div>
            </div>

            <!-- sheet -->
            <div class="flex-1 min-h-0 flex relative">
              <div id="sheet" class="w-[742px] bg-white grid grid-cols-[24px_57px_70px_58px_58px_57px_58px_58px_58px_57px_58px_57px_57px_14px] grid-rows-[24px_repeat(12,20px)] content-start border-r border-[#a8a8a8]"></div>
              <div class="flex-1 pl-[2px] pt-[5px] flex flex-col">
                <div class="w-[13px] h-[13px] bg-white border border-[#c0c0c0] flex items-center justify-center"><svg class="w-[6px] h-[3px] text-[#555] rotate-180"><use href="#caret"/></svg></div>
                <div class="w-[13px] h-[202px] bg-white border border-[#c0c0c0] border-t-0"></div>
              </div>
              <!-- hand drawn ellipse over the cells -->
              <svg class="absolute left-[28px] top-[36px] w-[140px] h-[36px]" viewBox="0 0 140 36"><ellipse cx="69" cy="17" rx="67" ry="14.5" transform="rotate(1 69 17)" fill="none" stroke="#ec7a78"/></svg>
            </div>
          </div>
        </div>
      </div>
      <!-- paint vertical scrollbar -->
      <div class="w-[14px] shrink-0 bg-[#f0f0f0] pt-[3px] flex flex-col">
        <div class="h-[315px] bg-[#cdcdcd] flex justify-center pt-[2px]"><svg class="w-[8px] h-[5px]" viewBox="0 0 8 5"><path d="M.5 4.5L4 1l3.5 3.5" fill="none" stroke="#555"/></svg></div>
        <div class="mt-auto mb-[5px] flex justify-center"><svg class="w-[8px] h-[5px]" viewBox="0 0 8 5"><path d="M.5.5L4 4 7.5.5" fill="none" stroke="#555" stroke-width="1.2"/></svg></div>
      </div>
    </div>

    <!-- paint horizontal scrollbar -->
    <div class="h-[15px] shrink-0 bg-[#f0f0f0] flex items-center">
      <svg class="ml-[5px] w-[5px] h-[8px]" viewBox="0 0 5 8"><path d="M4.5.5L1 4l3.5 3.5" fill="none" stroke="#444" stroke-width="1.2"/></svg>
      <div class="ml-[5px] w-[960px] h-[12px] bg-[#cdcdcd]"></div>
      <svg class="ml-[25px] w-[5px] h-[8px]" viewBox="0 0 5 8"><path d="M.5.5L4 4 .5 7.5" fill="none" stroke="#444" stroke-width="1.2"/></svg>
    </div>

    <!-- paint status bar -->
    <div class="h-[20px] shrink-0 bg-[#f0f0f0] border-t border-[#e4e4e4] flex items-center text-[10px] text-[#555]">
      <div class="w-[125px] h-full border-r border-[#dcdcdc] flex items-center pl-[3px]"><svg class="w-[10px] h-[10px]" viewBox="0 0 10 10"><path d="M5 0v10M0 5h10M3.5 1.5L5 0l1.5 1.5M3.5 8.5L5 10l1.5-1.5M1.5 3.5L0 5l1.5 1.5M8.5 3.5L10 5 8.5 6.5" fill="none" stroke="#3a5a80"/></svg></div>
      <div class="w-[125px] h-full border-r border-[#dcdcdc] flex items-center pl-[5px]"><svg class="w-[10px] h-[10px]" viewBox="0 0 10 10"><path d="M.5 3.5V0M0 .5h3M3 2.5h6.5v6H3z" fill="none" stroke="#555" stroke-dasharray="1 1"/></svg></div>
      <div class="w-[125px] h-full border-r border-[#dcdcdc] flex items-center pl-[5px]"><svg class="w-[11px] h-[10px]" viewBox="0 0 11 10"><path d="M.5 4V0M0 .5h3M3 1.5h7.5v6.5H3z" fill="none" stroke="#555"/></svg><span class="ml-[4px] font-['Liberation_Sans',sans-serif]">1280 × 800px</span></div>
      <div class="w-[125px] h-full border-r border-[#dcdcdc]"></div>
      <div class="w-[365px] h-full border-r border-[#dcdcdc]"></div>
      <span class="ml-[18px] w-[22px] font-['Liberation_Sans',sans-serif]">100%</span>
      <div class="ml-[6px] w-[13px] h-[13px] rounded-full border border-[#888] flex items-center justify-center"><div class="w-[7px] h-px bg-[#444]"></div></div>
      <div class="relative ml-[6px] w-[68px] h-[2px] bg-[#dcdcdc]">
        <svg class="absolute left-[31px] -top-[6px] w-[8px] h-[13px]" viewBox="0 0 8 13"><path d="M0 0h8v9l-4 4-4-4z" fill="#0f6cc8"/></svg>
      </div>
      <div class="ml-[8px] w-[13px] h-[13px] rounded-full border border-[#888] relative flex items-center justify-center"><div class="w-[7px] h-px bg-[#444]"></div><div class="absolute w-px h-[7px] bg-[#444]"></div></div>
    </div>

    <!-- taskbar -->
    <div class="h-[32px] shrink-0 bg-[#1d3444] flex items-stretch text-white">
      <div class="w-[40px] flex items-center justify-center"><svg class="w-[14px] h-[14px]" viewBox="0 0 14 14"><path d="M0 2l6-.8v5.3H0zM7 1l7-1v6.5H7zM0 7.5h6v5.3L0 12zM7 7.5h7V14l-7-1z" fill="#fff"/></svg></div>
      <div class="w-[274px] bg-[#f2f2f2] flex items-center text-[#444] text-[11px]">
        <svg class="ml-[9px] w-[14px] h-[14px]" viewBox="0 0 14 14"><circle cx="8.5" cy="5.5" r="4.5" fill="none" stroke="#444" stroke-width="1.2"/><path d="M5.3 8.7L.5 13.5" stroke="#444" stroke-width="1.2"/></svg>
        <span class="ml-[8px] tracking-[-.3px]">ここに入力して検索</span>
      </div>
      <div class="w-[39.3px] flex items-center justify-center"><div class="w-[13px] h-[13px] rounded-full border-2 border-[#e6e6e6]"></div></div>
      <div class="w-[39.3px] flex items-center justify-center"><svg class="w-[14px] h-[13px]" viewBox="0 0 14 13"><path d="M.5 3h9v7h-9zM1 .5h8M1 12.5h8M12.5 1v3M12.5 6v1M12.5 9v3" fill="none" stroke="#e6e6e6"/></svg></div>
      <div class="w-[39.3px] flex items-center justify-center"><svg class="w-[21px] h-[21px]"><use href="#edge"/></svg></div>
      <div class="w-[39.3px] flex items-center justify-center"><svg class="w-[21px] h-[21px]"><use href="#chrome"/></svg></div>
      <div class="w-[39.3px] flex items-center justify-center border-b-2 border-[#76b9ed]"><svg class="w-[18px] h-[15px]" viewBox="0 0 18 15"><path d="M0 0h7l2 2h9v13H0z" fill="#f8cf5e"/><rect y="3" width="18" height="3" fill="#e9a825"/><rect x="6" y="9" width="6" height="6" fill="#1e88d0"/></svg></div>
      <div class="w-[39.3px] flex items-center justify-center"><svg class="w-[20px] h-[17px]" viewBox="0 0 20 17"><path d="M0 5h20v12H0z" fill="#3ba7e8"/><path d="M0 5l10-5 10 5-10 6z" fill="#1b7fc8"/><path d="M0 5l10 6 10-6v1l-10 6L0 6z" fill="#c8e6fa"/></svg></div>
      <div class="w-[39.3px] flex items-center justify-center"><div class="w-[20px] h-[20px] bg-[#585858] flex items-center justify-center"><div class="w-[13px] h-[13px] bg-white flex items-center justify-center"><div class="w-[6px] h-[6px] rounded-full bg-[#666]"></div></div></div></div>
      <div class="w-[39.3px] flex items-center justify-center"><div class="w-[19px] h-[19px] bg-[#222] flex items-center justify-center"><svg class="w-[13px] h-[7px]" viewBox="0 0 13 7"><path d="M2 .5C1 2 1 5 2 6.5M11 .5c1 1.500 1 4.500 0 6" fill="none" stroke="#ccc"/><path d="M4 1l5 2.5L4 6z" fill="#ccc"/></svg></div></div>
      <div class="w-[39.3px] flex items-center justify-center"><svg class="w-[19px] h-[19px]" viewBox="0 0 19 19"><rect width="19" height="19" fill="#0f78d4"/><path d="M4 11l5-4 6 0-4 3 3 3-5-1z" fill="#e84c88"/><path d="M7 10l5-3 3 0-5 4z" fill="#7ad0f0"/></svg></div>
      <div class="w-[39.3px] flex items-center justify-center border-b-2 border-[#76b9ed]"><svg class="w-[19px] h-[17px]" viewBox="0 0 19 17"><rect x="5" width="14" height="17" rx="1" fill="#21a366"/><rect x="12" width="7" height="8.5" fill="#33c481"/><rect x="12" y="8.5" width="7" height="8.5" fill="#107c41"/><rect y="3.5" width="10" height="10" rx="1" fill="#185c37"/><text x="5" y="11.5" text-anchor="middle" font-size="8" font-weight="bold" fill="#fff" font-family="Liberation Sans">X</text></svg></div>
      <div class="w-[39.3px] flex items-center justify-center border-b-2 border-[#76b9ed]"><svg class="w-[20px] h-[18px]" viewBox="0 0 20 18"><circle cx="11" cy="9" r="9" fill="#ed6c47"/><path d="M11 0a9 9 0 0 1 9 9h-9z" fill="#ff8f6b"/><rect y="4" width="10" height="10" rx="1" fill="#c43e1c"/><text x="5" y="12" text-anchor="middle" font-size="8" font-weight="bold" fill="#fff" font-family="Liberation Sans">P</text></svg></div>
      <div class="w-[39.3px] flex items-center justify-center bg-[#4a5b6b] border-b-2 border-[#76b9ed]"><svg class="w-[20px] h-[20px]" viewBox="0 0 20 20"><ellipse cx="9" cy="11" rx="9" ry="7.5" fill="#d8e6f2"/><circle cx="4" cy="9" r="1.5" fill="#e0584f"/><circle cx="7" cy="14" r="1.5" fill="#3f9e55"/><circle cx="8" cy="6.5" r="1.5" fill="#3c82d0"/><path d="M18 1l-7 14" stroke="#e0a030" stroke-width="2"/></svg></div>
      <div class="flex-1 flex items-center text-[#e6e6e6]">
        <svg class="ml-[87px] w-[10px] h-[6px]" viewBox="0 0 10 6"><path d="M.5 5.5L5 1l4.5 4.5" fill="none" stroke="#e6e6e6" stroke-width="1.2"/></svg>
        <svg class="ml-[4px] w-[14px] h-[9px]" viewBox="0 0 14 9"><path d="M3 9C0 9 0 5 2.5 5 3 1 9 0 10 4c3 0 5 5 1 5z" fill="#e6e6e6"/></svg>
        <svg class="ml-[7px] w-[9px] h-[15px]" viewBox="0 0 9 15"><rect x=".5" y="3.5" width="6" height="7" fill="none" stroke="#e6e6e6"/><path d="M7 5.5l2-1v5l-2-1zM1.5 1.5h5M1.5 13.5h5" fill="none" stroke="#e6e6e6"/></svg>
        <svg class="ml-[7px] w-[12px] h-[12px]" viewBox="0 0 12 12"><path d="M1 11C1 6 6 1 11 1M3.5 11C3.5 7 7 3.5 11 3.5M6 11C6 8.5 8.5 6 11 6M8.5 11c0-1 1-2.5 2.5-2.5" fill="none" stroke="#c8c8c8"/></svg>
        <svg class="ml-[6px] w-[13px] h-[12px]" viewBox="0 0 13 12"><path d="M.5 4H3L6 1v10L3 8H.5zM8 3.5c1.500 1.500 1.500 3.500 0 5M10 2c2.500 2.500 2.500 5.500 0 8" fill="none" stroke="#e6e6e6"/></svg>
        <span class="ml-[6px] w-[11px] text-[16px] leading-none font-['Liberation_Sans',sans-serif] text-white">A</span>
        <svg class="ml-[13px] w-[13px] h-[13px]" viewBox="0 0 13 13"><path d="M.5.5h12v9H7.5L6 12V9.5H.5z" fill="none" stroke="#e6e6e6"/></svg>
      </div>
    </div>

    <!-- red highlight and tooltip sit over the ribbon -->
    <div class="absolute left-[2px] top-[37px] w-[44px] h-[66px] border-[3px] border-[#e60012] pointer-events-none"></div>
    <div class="absolute left-[6px] top-[117px] w-[144px] h-[53px] border border-[#a0a0a0] rounded-[1px] shadow-[1px_1px_3px_rgba(0,0,0,.35)] bg-[linear-gradient(#ffffff,#e6ecf6)] text-[#555] leading-[13px] px-[4px] pt-[3px]">
      <div class="font-medium tracking-[-.6px]">貼り付け (Ctrl+V)</div>
      <div class="pl-[6px] mt-[7px] text-[9.5px] tracking-[-1.2px]">クリップボードの内容を貼り付けま<br>す。</div>
    </div>
  </div>

  <script>
    // sheet cells by row, columns A and B
    const sheetData = {
      1: ['No', '氏名'],
      2: ['1', '佐藤　太郎'],
      3: ['2', '鈴木　次郎'],
      4: ['3', '田中　三郎']
    };
    const sheet = document.getElementById('sheet');
    const letters = ['', 'A', 'B', 'C', 'D', 'E', 'F', 'G', 'H', 'I', 'J', 'K', 'L', ''];
    letters.forEach((letter, i) => {
      const head = document.createElement('div');
      head.className = 'bg-[#e6e6e6] border-r border-b border-[#b4b4b4] text-[12px] text-[#444] flex items-center justify-center';
      if (i === 0) {
        head.innerHTML = '<svg class="w-[14px] h-[14px] mt-[2px] ml-[3px]" viewBox="0 0 14 14"><path d="M14 0v14H0z" fill="#b6b6b6"/></svg>';
      } else {
        head.textContent = letter;
      }
      sheet.appendChild(head);
    });
    for (let r = 1; r <= 12; r++) {
      const rowHead = document.createElement('div');
      rowHead.className = r === 7
        ? 'bg-[#cfcfcf] border-r-2 border-r-[#217346] border-b border-b-[#b4b4b4] text-center text-[12px] leading-[18px] text-[#217346]'
        : 'bg-[#e6e6e6] border-r border-b border-[#b4b4b4] text-center text-[12px] leading-[18px] text-[#444]';
      // row 12 only shows a sliver at the window's edge
      if (r < 12) rowHead.textContent = r;
      sheet.appendChild(rowHead);
      for (let c = 0; c < 13; c++) {
        const cell = document.createElement('div');
        const value = (sheetData[r] || [])[c] || '';
        cell.className = c === 0 && r > 1
          ? 'border-r border-b border-[#e0e0e0] text-right pr-[2px] text-[12px] leading-[18px] text-[#333]'
          : 'border-r border-b border-[#e0e0e0] pl-[2px] text-[12px] leading-[18px] text-[#333] [font-feature-settings:normal]';
        cell.textContent = value;
        sheet.appendChild(cell);
      }
    }
  </script>
</body>
</html>
